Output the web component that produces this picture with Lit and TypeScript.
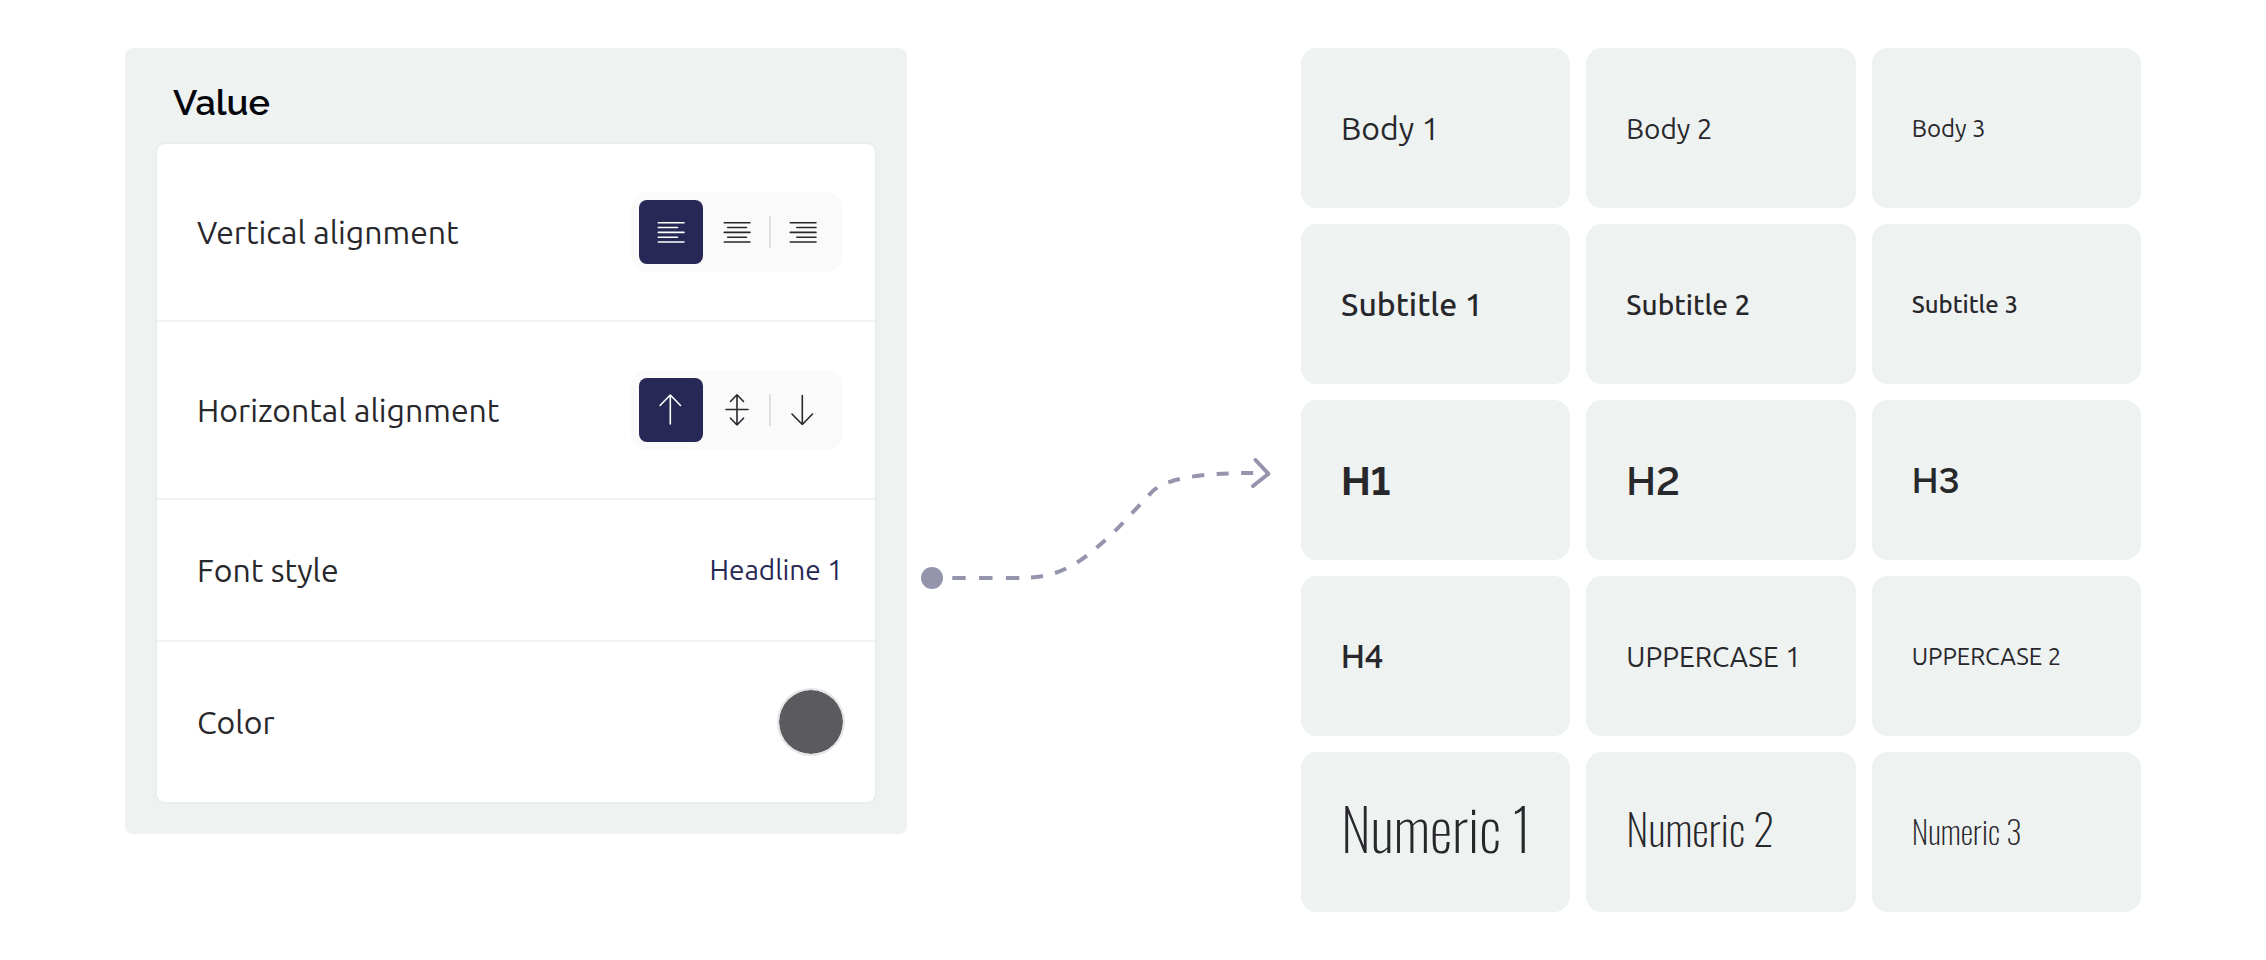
import { LitElement, html, svg, css } from "lit";
import { customElement, property, state } from "lit/decorators.js";
import { classMap } from "lit/directives/class-map.js";

interface Option {
  id: string;
  label: string;
}

const ICONS: Record<string, unknown> = {
  left: svg`<path d="M3.3 6.7H29M3.3 11.5H22.5M3.3 16.4H29M3.3 21.2H22.5M3.3 26H29" />`,
  center: svg`<path d="M3.3 6.7H29M6.7 11.5H25.5M3.3 16.4H29M6.7 21.2H25.5M3.3 26H29" />`,
  right: svg`<path d="M3.3 6.7H29M9.8 11.5H29M3.3 16.4H29M9.8 21.2H29M3.3 26H29" />`,
  top: svg`<path d="M15.3 1V30M5 11.5L15.3 1L25.5 11.5" />`,
  middle: svg`<path d="M16 1V31M9.5 7.5L16 0.8L22.5 7.5M5 15.5H27M9.5 24.2L16 31L22.5 24.2" />`,
  bottom: svg`<path d="M15.3 1.5V30.5M5 20L15.3 30.5L25.5 20" />`,
};

@customElement("segmented-control")
class SegmentedControl extends LitElement {
  @property({ attribute: false }) options: Option[] = [];
  @property() value = "";
  @property() label = "";

  static styles = css`
    :host {
      display: block;
    }
    .group {
      display: flex;
      padding: 8px;
      border-radius: 16px;
      background: #fafafa;
    }
    .option {
      display: grid;
      place-items: center;
      width: 64px;
      height: 64px;
      padding: 0;
      border: 0;
      border-radius: 8px;
      background: none;
      color: #28272c;
      cursor: pointer;
    }
    .option.selected {
      background: #272855;
      color: #fff;
    }
    .divider {
      align-self: center;
      width: 2px;
      height: 32px;
      background: #dfdfe0;
    }
    .divider.hidden {
      background: none;
    }
    .icon {
      width: 32px;
      height: 32px;
      overflow: visible;
      fill: none;
      stroke: currentColor;
      stroke-width: 1.6;
      stroke-linecap: round;
      stroke-linejoin: round;
    }
  `;

  render() {
    return html`<div class="group" role="group" aria-label=${this.label}>
      ${this.options.map((option, i) => {
        const selected = option.id === this.value;
        const nextToSelected = selected || this.options[i - 1]?.id === this.value;
        return html`
          ${i > 0
            ? html`<span class=${classMap({ divider: true, hidden: nextToSelected })}></span>`
            : ""}
          <button
            type="button"
            class=${classMap({ option: true, selected })}
            aria-label=${option.label}
            aria-pressed=${selected ? "true" : "false"}
            @click=${() => (this.value = option.id)}
          >
            <svg class="icon" viewBox="0 0 32 32" aria-hidden="true">${ICONS[option.id]}</svg>
          </button>
        `;
      })}
    </div>`;
  }
}

const TEXT_STYLES = [
  { name: "Body 1", look: "large" },
  { name: "Body 2", look: "medium" },
  { name: "Body 3", look: "small" },
  { name: "Subtitle 1", look: "large strong" },
  { name: "Subtitle 2", look: "medium strong" },
  { name: "Subtitle 3", look: "small strong" },
  { name: "H1", look: "h1" },
  { name: "H2", look: "h2" },
  { name: "H3", look: "h3" },
  { name: "H4", look: "h4" },
  { name: "UPPERCASE 1", look: "medium" },
  { name: "UPPERCASE 2", look: "small" },
  { name: "Numeric 1", look: "numeric n1" },
  { name: "Numeric 2", look: "numeric n2" },
  { name: "Numeric 3", look: "numeric n3" },
];

@customElement("app-root")
class AppRoot extends LitElement {
  @state() private color = "#5b5a5f";

  static styles = css`
    :host {
      display: block;
      min-height: 100vh;
      box-sizing: border-box;
      padding: 48px 125px;
      background: #fff;
      color: #28272c;
      font-family: Ubuntu, "Noto Sans", sans-serif;
    }
    .page {
      display: grid;
      grid-template-columns: 782fr 394fr 840fr;
      align-items: start;
    }
    .panel {
      padding: 24px 32px 32px;
      border-radius: 8px;
      background: #eef2f1;
    }
    .title {
      margin: 0;
      padding: 0 16px 12px;
      color: #05050c;
      font: 600 36px/60px Raleway, Lato, sans-serif;
    }
    .rows {
      border-radius: 8px;
      background: #fff;
      box-shadow: 0 0 0 2px #e9eeed;
    }
    .row {
      display: flex;
      align-items: center;
      justify-content: space-between;
      padding: 48px 32px 48px 40px;
      border-bottom: 2px solid #eef2f1;
      font-size: 32px;
      line-height: 44px;
    }
    .row:last-child {
      border-bottom: 0;
    }
    .style-name {
      padding: 0;
      border: 0;
      background: none;
      color: #272855;
      font: inherit;
      font-size: 28px;
      cursor: pointer;
    }
    .swatch {
      appearance: none;
      width: 64px;
      height: 64px;
      padding: 0;
      border: 0;
      border-radius: 50%;
      background: none;
      box-shadow: 0 0 0 2px #e5e5e5;
      cursor: pointer;
    }
    .swatch::-webkit-color-swatch-wrapper {
      padding: 0;
    }
    .swatch::-webkit-color-swatch {
      border: 0;
      border-radius: 50%;
    }
    .connector {
      width: 100%;
      margin-top: 382px;
      fill: none;
      stroke: #9594ad;
      stroke-width: 4;
    }
    .dot {
      fill: #9594ad;
      stroke: none;
    }
    .lead {
      stroke-dasharray: 13.4 13.4;
    }
    .curve {
      stroke-dasharray: 12 12.5;
    }
    .head {
      stroke-linecap: round;
      stroke-linejoin: round;
    }
    .cards {
      display: grid;
      grid-template-columns: repeat(3, minmax(0, 1fr));
      gap: 16px;
      margin: 0;
      padding: 0;
      list-style: none;
    }
    .card {
      display: flex;
      align-items: center;
      height: 160px;
      box-sizing: border-box;
      padding: 0 24px 0 40px;
      border-radius: 16px;
      background: #eef2f1;
      white-space: nowrap;
    }
    .large {
      font-size: 32px;
    }
    .medium {
      font-size: 28px;
    }
    .small {
      font-size: 24px;
    }
    .strong {
      font-weight: 500;
    }
    .h1,
    .h2,
    .h3,
    .h4 {
      font-family: Raleway, Lato, sans-serif;
      font-variant-numeric: lining-nums;
      font-weight: 600;
    }
    .h1 {
      font-size: 40px;
      font-weight: 700;
    }
    .h2 {
      font-size: 40px;
    }
    .h3 {
      font-size: 36px;
    }
    .h4 {
      font-size: 32px;
    }
    .numeric {
      font-family: Oswald, "Roboto Condensed", sans-serif;
      font-weight: 200;
    }
    .n1 {
      padding-bottom: 10px;
      font-size: 58px;
    }
    .n2 {
      padding-bottom: 10px;
      font-size: 43px;
    }
    .n3 {
      padding-bottom: 4px;
      font-size: 32px;
    }
  `;

  render() {
    return html`
      <main class="page">
        <section class="panel">
          <h1 class="title">Value</h1>
          <div class="rows">
            <div class="row">
              <span>Vertical alignment</span>
              <segmented-control
                label="Vertical alignment"
                value="left"
                .options=${[
                  { id: "left", label: "Left" },
                  { id: "center", label: "Center" },
                  { id: "right", label: "Right" },
                ]}
              ></segmented-control>
            </div>
            <div class="row">
              <span>Horizontal alignment</span>
              <segmented-control
                label="Horizontal alignment"
                value="top"
                .options=${[
                  { id: "top", label: "Top" },
                  { id: "middle", label: "Middle" },
                  { id: "bottom", label: "Bottom" },
                ]}
              ></segmented-control>
            </div>
            <div class="row">
              <span id="font-style">Font style</span>
              <button type="button" class="style-name" aria-describedby="font-style">Headline 1</button>
            </div>
            <div class="row">
              <label for="color">Color</label>
              <input
                id="color"
                class="swatch"
                type="color"
                .value=${this.color}
                @input=${(e: Event) => (this.color = (e.target as HTMLInputElement).value)}
              />
            </div>
          </div>
        </section>
        <svg class="connector" viewBox="0 0 394 180" aria-hidden="true">
          <circle class="dot" cx="25" cy="148" r="11" />
          <path class="lead" d="M45.3 148H112.5" />
          <path class="curve" d="M124 147.6C160 145 180 127 206 103C222 87 235 72 243 64C255 49 290 42 361 43" />
          <path class="head" d="M348.5 30L361.5 43.8L346 56" />
        </svg>
        <ul class="cards">
          ${TEXT_STYLES.map((s) => html`<li class="card"><span class=${s.look}>${s.name}</span></li>`)}
        </ul>
      </main>
    `;
  }
}
